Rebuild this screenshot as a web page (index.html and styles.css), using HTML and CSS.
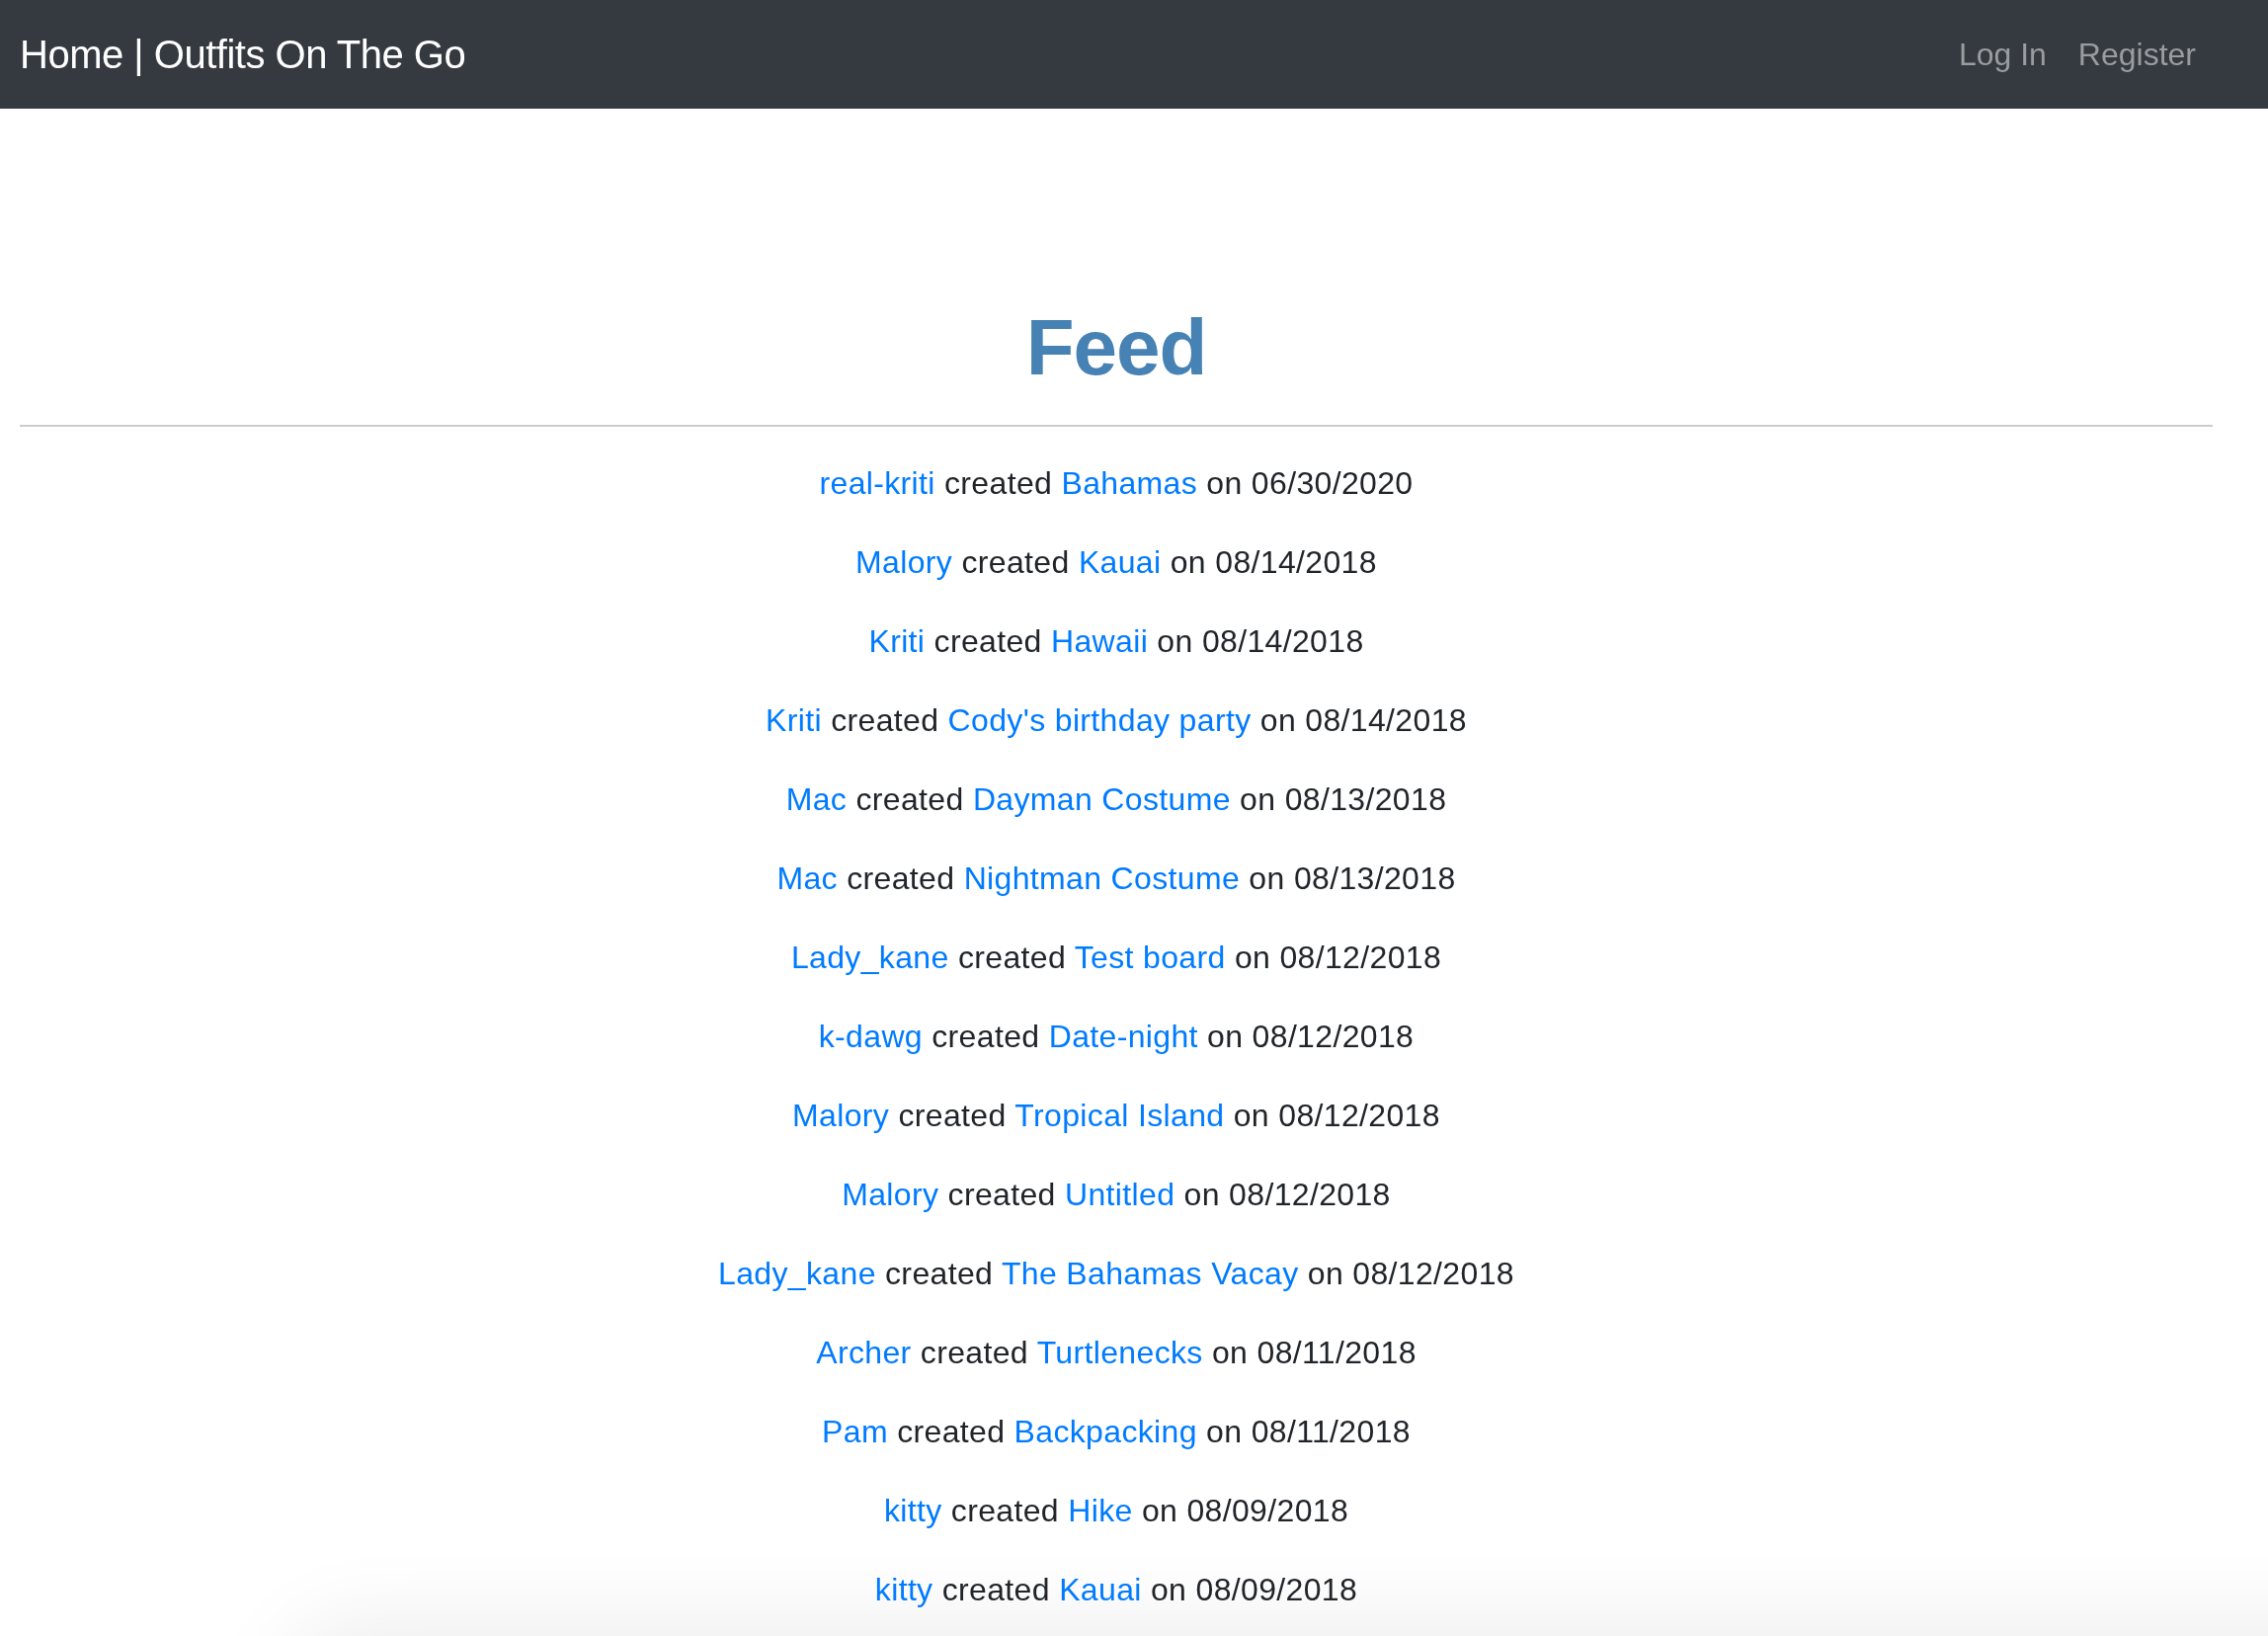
FILE: index.html
```html
<!DOCTYPE html>
<html lang="en">
<head>
<meta charset="utf-8">
<title>Home | Outfits On The Go</title>
<link rel="stylesheet" href="styles.css">
</head>
<body>
<nav class="navbar">
  <a class="brand" href="#">Home | Outfits On The Go</a>
  <div class="nav-links">
    <a class="nav-link" href="#">Log In</a>
    <a class="nav-link" href="#">Register</a>
  </div>
</nav>
<main class="content">
  <h1 class="title">Feed</h1>
  <hr class="divider">
  <div class="feed">
    <p class="row"><a href="#">real-kriti</a> created <a href="#">Bahamas</a> on 06/30/2020</p>
    <p class="row"><a href="#">Malory</a> created <a href="#">Kauai</a> on 08/14/2018</p>
    <p class="row"><a href="#">Kriti</a> created <a href="#">Hawaii</a> on 08/14/2018</p>
    <p class="row"><a href="#">Kriti</a> created <a href="#">Cody's birthday party</a> on 08/14/2018</p>
    <p class="row"><a href="#">Mac</a> created <a href="#">Dayman Costume</a> on 08/13/2018</p>
    <p class="row"><a href="#">Mac</a> created <a href="#">Nightman Costume</a> on 08/13/2018</p>
    <p class="row"><a href="#">Lady_kane</a> created <a href="#">Test board</a> on 08/12/2018</p>
    <p class="row"><a href="#">k-dawg</a> created <a href="#">Date-night</a> on 08/12/2018</p>
    <p class="row"><a href="#">Malory</a> created <a href="#">Tropical Island</a> on 08/12/2018</p>
    <p class="row"><a href="#">Malory</a> created <a href="#">Untitled</a> on 08/12/2018</p>
    <p class="row"><a href="#">Lady_kane</a> created <a href="#">The Bahamas Vacay</a> on 08/12/2018</p>
    <p class="row"><a href="#">Archer</a> created <a href="#">Turtlenecks</a> on 08/11/2018</p>
    <p class="row"><a href="#">Pam</a> created <a href="#">Backpacking</a> on 08/11/2018</p>
    <p class="row"><a href="#">kitty</a> created <a href="#">Hike</a> on 08/09/2018</p>
    <p class="row"><a href="#">kitty</a> created <a href="#">Kauai</a> on 08/09/2018</p>
  </div>
</main>
<div class="bottom-shade"></div>
</body>
</html>
```
FILE: styles.css
```css
html {
  background: #ffffff;
}
body {
  margin: 0;
  font-family: "Liberation Sans", Arial, sans-serif;
  color: #212529;
  background: transparent;
}
a {
  text-decoration: none;
}
.navbar {
  height: 110px;
  background: #343a40;
  display: flex;
  align-items: center;
  justify-content: space-between;
  padding: 0 57px 0 20px;
  box-sizing: border-box;
}
.brand {
  color: #ffffff;
  font-size: 40px;
  line-height: 60px;
  letter-spacing: -0.5px;
}
.nav-links {
  display: flex;
}
.nav-link {
  color: #9a9da0;
  font-size: 32px;
  line-height: 48px;
  padding: 0 16px;
}
.content {
  margin: 0 56px 0 20px;
  padding-top: 194px;
}
.title {
  margin: 0;
  text-align: center;
  font-size: 80px;
  line-height: 96px;
  font-weight: bold;
  color: #4682b4;
  letter-spacing: -1px;
}
.divider {
  margin: 30px 0 33px;
  border: 0;
  border-top: 2px solid #cccccc;
  height: 0;
}
.feed {
  text-align: center;
}
.row {
  margin: 0 0 32px;
  font-size: 32px;
  line-height: 48px;
  letter-spacing: 0.35px;
}
.row a {
  color: #007bff;
}
.bottom-shade {
  position: fixed;
  top: 100%;
  left: 300px;
  right: -200px;
  height: 120px;
  border-radius: 60px;
  box-shadow: 0 0 90px 10px rgba(0, 0, 0, 0.08);
  z-index: -1;
  pointer-events: none;
}
```
